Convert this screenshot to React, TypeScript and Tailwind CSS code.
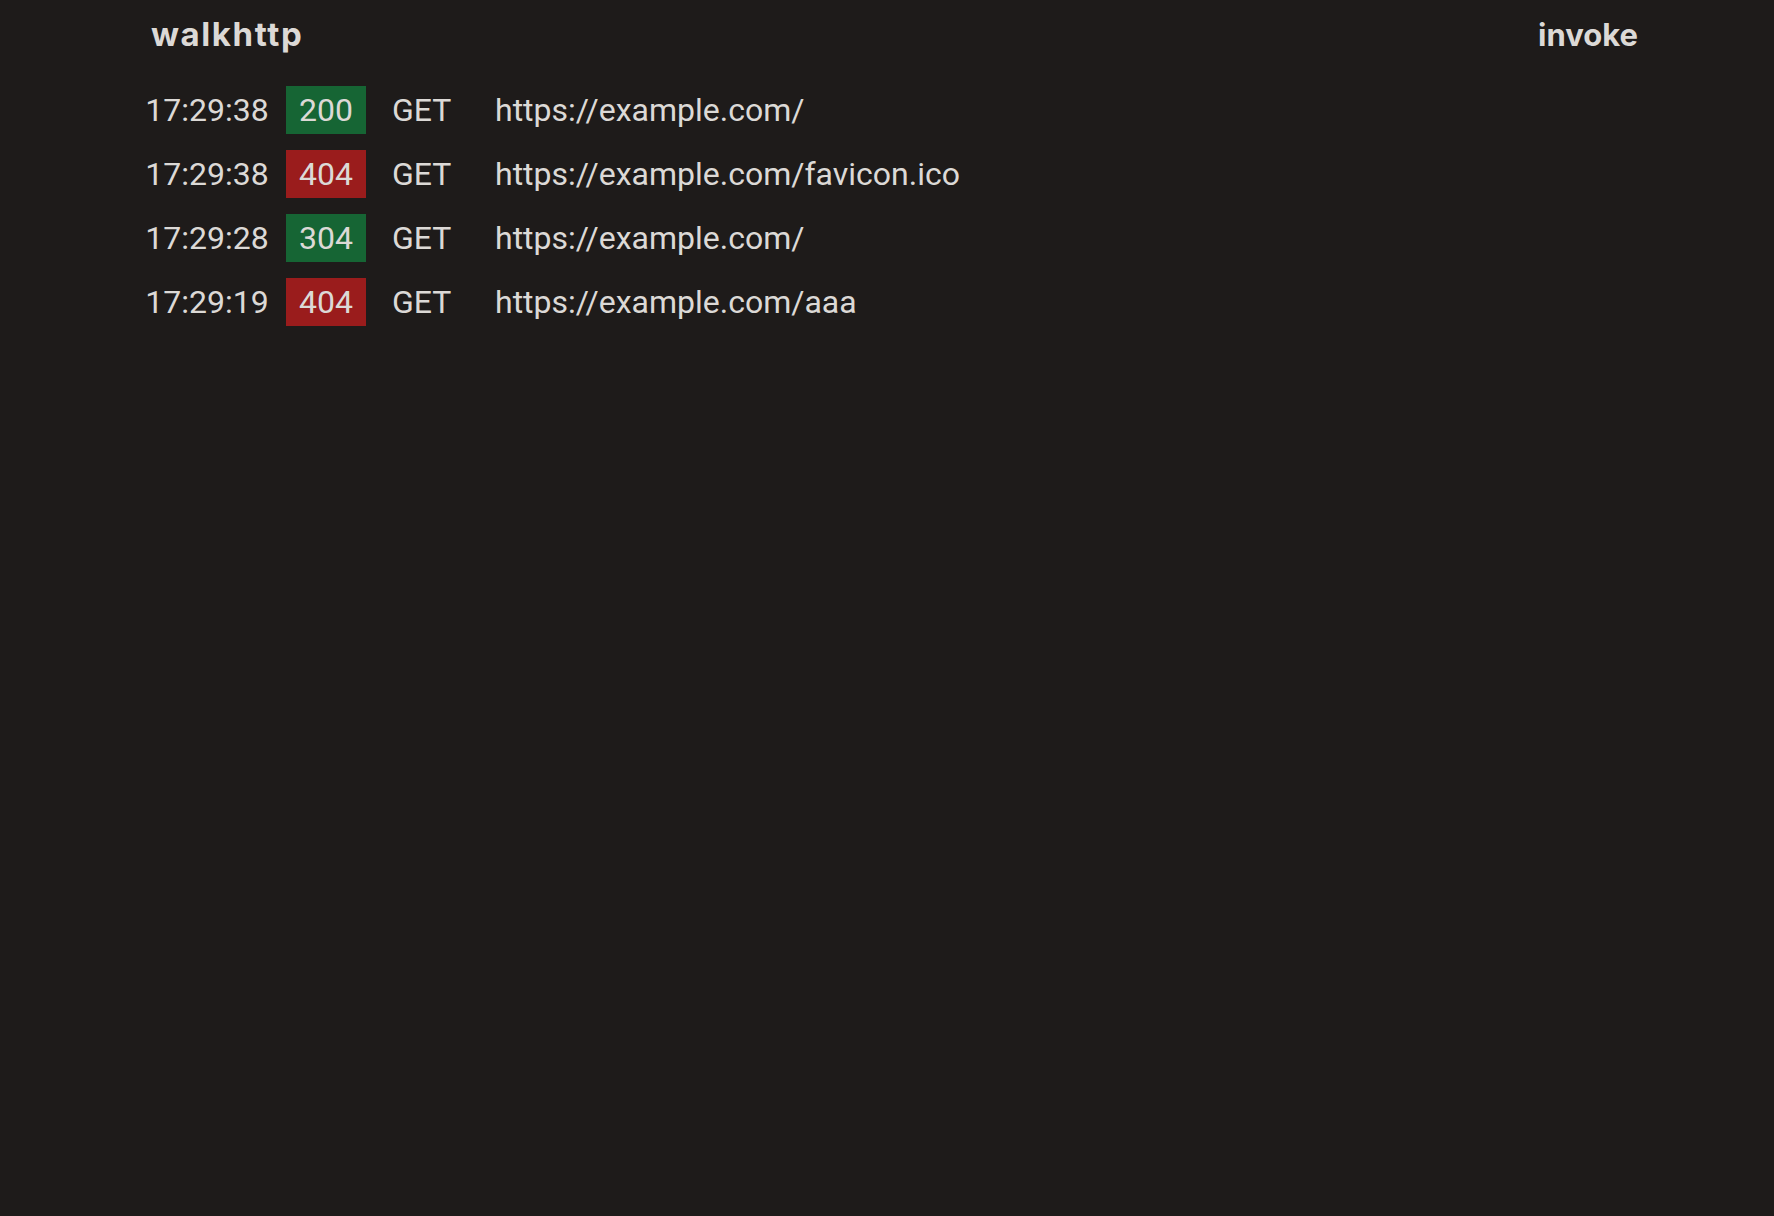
import React from "react";

const requests = [
  { time: "17:29:38", status: 200, method: "GET", url: "https://example.com/" },
  { time: "17:29:38", status: 404, method: "GET", url: "https://example.com/favicon.ico" },
  { time: "17:29:28", status: 304, method: "GET", url: "https://example.com/" },
  { time: "17:29:19", status: 404, method: "GET", url: "https://example.com/aaa" },
];

const App = () => {
  return (
    <div className="w-full h-[1216px] bg-[#1e1b1a] text-[#dcd9d6] overflow-hidden">
      {/* Header */}
      <div
        className="flex items-center justify-between pl-[151px] pr-[136px] h-[70px]"
        style={{ fontFamily: "Inter, 'Noto Sans', sans-serif" }}
      >
        <h1 className="text-[33px] font-bold tracking-[1.6px]">walkhttp</h1>
        <button className="text-[31px] font-bold tracking-[0px]">invoke</button>
      </div>

      {/* Request log */}
      <div
        className="flex flex-col gap-4 pt-4 pl-[128px]"
        style={{ fontFamily: "Roboto, 'Noto Sans', sans-serif" }}
      >
        {requests.map((req, i) => (
          <div key={i} className="flex items-center h-12 text-[32px]">
            <span className="w-[158px] text-center">{req.time}</span>
            <span
              className={`w-20 h-12 flex items-center justify-center ${
                req.status < 400 ? "bg-[#166534]" : "bg-[#9a1c1c]"
              }`}
            >
              {req.status}
            </span>
            <span className="ml-[26px] w-[103px]">{req.method}</span>
            <span>{req.url}</span>
          </div>
        ))}
      </div>
    </div>
  );
};

export default App;
